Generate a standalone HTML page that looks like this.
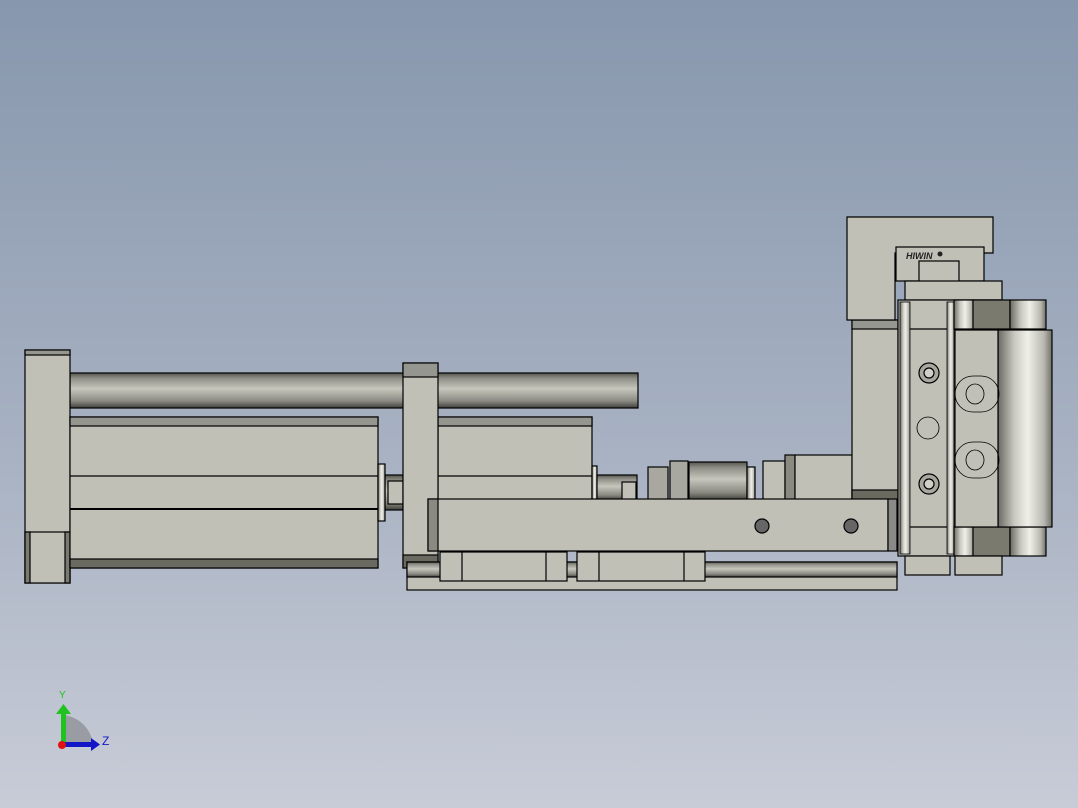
<!DOCTYPE html><html><head><style>html,body{margin:0;padding:0}body{width:1078px;height:808px;overflow:hidden;background:linear-gradient(#8797ad,#a7b1c2 55%,#c8ccd7)}svg{position:absolute;left:0;top:0}</style></head><body>
<svg width="1078" height="808" viewBox="0 0 1078 808">
<defs>
<linearGradient id="rod" x1="0" y1="0" x2="0" y2="1"><stop offset="0" stop-color="#55554f"/><stop offset=".15" stop-color="#8e8e86"/><stop offset=".45" stop-color="#c6c6bd"/><stop offset=".8" stop-color="#8a8a82"/><stop offset="1" stop-color="#40403c"/></linearGradient>
<linearGradient id="rodv" x1="0" y1="0" x2="1" y2="0"><stop offset="0" stop-color="#6a6a64"/><stop offset=".3" stop-color="#c8c8c0"/><stop offset=".55" stop-color="#f0f0ea"/><stop offset=".85" stop-color="#b8b8b0"/><stop offset="1" stop-color="#707068"/></linearGradient>
</defs>
<g stroke="#000" stroke-width="1.2">
<!-- rod -->
<rect x="70" y="373" width="568" height="35" fill="url(#rod)"/>
<!-- left end plate -->
<rect x="25" y="350" width="45" height="233" fill="#c0c0b7"/>
<rect x="25" y="350" width="45" height="5" fill="#959690"/>
<rect x="25" y="532" width="45" height="51" fill="#c0c0b7"/>
<rect x="25" y="532" width="5" height="51" fill="#7a7a70"/>
<rect x="65" y="532" width="5" height="51" fill="#7a7a70"/>
<!-- cylinder body -->
<rect x="70" y="417" width="308" height="151" fill="#c0c0b7"/>
<rect x="70" y="417" width="308" height="9" fill="#959690"/>
<rect x="70" y="559" width="308" height="9" fill="#6a6a60"/>
<line x1="70" y1="476" x2="378" y2="476"/><line x1="70" y1="509" x2="378" y2="509" stroke-width="2"/>
<!-- shaft -->
<rect x="385" y="475" width="18" height="35" fill="url(#rod)"/>
<rect x="388" y="481" width="15" height="23" fill="#c0c0b7"/>
<rect x="378" y="464" width="7" height="57" fill="url(#rodv)"/>
<!-- second cylinder -->
<rect x="438" y="417" width="154" height="84" fill="#c0c0b7"/>
<rect x="438" y="417" width="154" height="9" fill="#959690"/>
<line x1="438" y1="476" x2="592" y2="476"/>
<!-- middle plate -->
<rect x="403" y="363" width="35" height="205" fill="#c0c0b7"/>
<rect x="403" y="363" width="35" height="14" fill="#959690"/>
<rect x="403" y="555" width="35" height="13" fill="#6a6a60"/>
<!-- rail -->
<rect x="407" y="562" width="490" height="28" fill="#c0c0b7"/>
<rect x="407" y="562" width="490" height="15" fill="url(#rod)"/>
<rect x="440" y="552" width="127" height="29" fill="#c0c0b7"/>
<line x1="462" y1="552" x2="462" y2="581"/><line x1="546" y1="552" x2="546" y2="581"/>
<rect x="577" y="552" width="128" height="29" fill="#c0c0b7"/>
<line x1="599" y1="552" x2="599" y2="581"/><line x1="684" y1="552" x2="684" y2="581"/>
<!-- fittings -->
<rect x="592" y="466" width="5" height="34" fill="url(#rodv)"/>
<rect x="597" y="475" width="40" height="25" fill="url(#rod)"/>
<rect x="622" y="482" width="14" height="18" fill="#c0c0b7"/>
<rect x="648" y="467" width="20" height="33" fill="#a8a8a0"/>
<rect x="670" y="461" width="18" height="39" fill="#a8a8a0"/>
<rect x="689" y="462" width="58" height="38" fill="url(#rod)"/>
<rect x="747" y="467" width="8" height="33" fill="url(#rodv)"/>
<rect x="763" y="461" width="22" height="39" fill="#c0c0b7"/>
<rect x="785" y="455" width="10" height="45" fill="#8a8a80"/>
<rect x="795" y="455" width="57" height="45" fill="#c0c0b7"/>
<!-- vertical bracket -->
<rect x="852" y="320" width="46" height="180" fill="#c0c0b7"/>
<rect x="852" y="490" width="46" height="10" fill="#6a6a60"/>
<rect x="852" y="320" width="46" height="9" fill="#959690"/>
<!-- slider -->
<rect x="428" y="499" width="460" height="52" fill="#c0c0b7"/>
<rect x="428" y="499" width="10" height="52" fill="#8a8a80"/>
<rect x="888" y="499" width="9" height="52" fill="#8a8a88"/>
<circle cx="762" cy="526" r="7" fill="#666"/><circle cx="851" cy="526" r="7" fill="#666"/>
<!-- L bracket -->
<path d="M847 217H993V253H895V320H847Z" fill="#c0c0b7"/>
<rect x="896" y="247" width="88" height="34" fill="#c0c0b7"/>
<rect x="919" y="261" width="40" height="29" fill="#c0c0b7"/>
<rect x="905" y="281" width="97" height="19" fill="#c0c0b7"/>
<!-- gripper body -->
<rect x="898" y="300" width="102" height="256" fill="#c0c0b7"/>
<line x1="902" y1="329" x2="1000" y2="329"/><line x1="902" y1="527" x2="1000" y2="527"/>
<rect x="900" y="302" width="10" height="252" fill="url(#rodv)" stroke-width=".8"/>
<rect x="947" y="302" width="7" height="252" fill="url(#rodv)" stroke-width=".8"/>
<rect x="954" y="300" width="20" height="29" fill="url(#rodv)"/>
<rect x="954" y="527" width="20" height="29" fill="url(#rodv)"/>
<rect x="973" y="300" width="37" height="29" fill="#7a7a6e"/>
<rect x="973" y="527" width="37" height="29" fill="#7a7a6e"/>
<rect x="1010" y="300" width="36" height="29" fill="url(#rodv)"/>
<rect x="1010" y="527" width="36" height="29" fill="url(#rodv)"/>
<rect x="998" y="330" width="54" height="197" fill="url(#rodv)"/>
<rect x="955" y="330" width="43" height="197" fill="#c0c0b7"/>
<circle cx="929" cy="373" r="10" fill="#a8a8a0"/><circle cx="929" cy="373" r="5" fill="#d0d0c8"/>
<circle cx="929" cy="484" r="10" fill="#a8a8a0"/><circle cx="929" cy="484" r="5" fill="#d0d0c8"/>
<circle cx="928" cy="428" r="11" fill="none" stroke-width=".8"/>
<rect x="955" y="376" width="44" height="36" rx="18" fill="none" stroke-width=".8"/>
<ellipse cx="975" cy="394" rx="9" ry="10" fill="none" stroke-width=".8"/>
<rect x="955" y="442" width="44" height="36" rx="18" fill="none" stroke-width=".8"/>
<ellipse cx="975" cy="460" rx="9" ry="10" fill="none" stroke-width=".8"/>
<rect x="905" y="556" width="45" height="19" fill="#c0c0b7"/>
<rect x="955" y="556" width="47" height="19" fill="#c0c0b7"/>
</g>
<text x="906" y="259" font-family="Liberation Sans,sans-serif" font-size="9" font-style="italic" font-weight="bold" fill="#222">HIWIN</text>
<circle cx="940" cy="254" r="2.5" fill="#222"/>
<!-- triad -->
<path d="M63 745V715A33 33 0 0 1 93 745Z" fill="#9a9ca3"/>
<rect x="61" y="712" width="5" height="33" fill="#1fc21f"/>
<path d="M56 714L63.5 704L71 714Z" fill="#1fc21f"/>
<rect x="63" y="742" width="30" height="5" fill="#1515c8"/>
<path d="M91 738L100 744.5L91 751Z" fill="#1515c8"/>
<circle cx="62" cy="745" r="4" fill="#e01010"/>
<text x="59" y="698" font-family="Liberation Sans,sans-serif" font-size="10" fill="#1fc21f">Y</text>
<text x="102" y="745" font-family="Liberation Sans,sans-serif" font-size="12" fill="#1515c8">Z</text>
</svg></body></html>
